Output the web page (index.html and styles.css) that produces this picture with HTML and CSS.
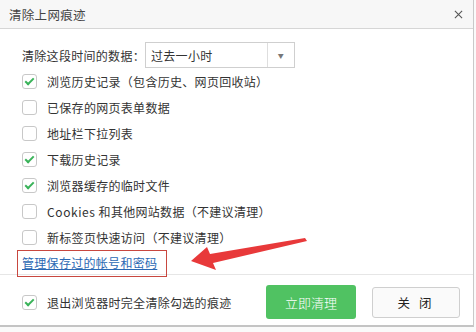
FILE: index.html
```html
<!DOCTYPE html>
<html lang="zh-CN">
<head>
    <meta charset="UTF-8">
    <title>清除上网痕迹</title>
    <link rel="stylesheet" href="styles.css">
</head>
<body>
    <div class="dialog">
        <div class="title">
            <span>清除上网痕迹</span>
            <svg class="close" viewBox="0 0 10 10"><path d="M1 1 9 9M9 1 1 9" stroke="#555" stroke-width="1.2"/></svg>
        </div>

        <div class="body">
            <div class="range">
                <span>清除这段时间的数据：</span>
                <div class="select">
                    <span class="value">过去一小时</span>
                    <span class="caret">▼</span>
                </div>
            </div>

            <label class="row"><span class="box on"></span>浏览历史记录（包含历史、网页回收站）</label>
            <label class="row"><span class="box"></span>已保存的网页表单数据</label>
            <label class="row"><span class="box"></span>地址栏下拉列表</label>
            <label class="row"><span class="box on"></span>下载历史记录</label>
            <label class="row"><span class="box on"></span>浏览器缓存的临时文件</label>
            <label class="row"><span class="box"></span><span class="latin">Cookies</span>&nbsp;和其他网站数据（不建议清理）</label>
            <label class="row"><span class="box"></span>新标签页快速访问（不建议清理）</label>

            <div class="links">
                <a href="#">管理保存过的帐号和密码</a>
            </div>
        </div>

        <div class="footer">
            <label class="row"><span class="box on"></span>退出浏览器时完全清除勾选的痕迹</label>
            <div class="buttons">
                <button class="btn primary">立即清理</button>
                <button class="btn close-btn">关 闭</button>
            </div>
        </div>

        <!-- annotation drawn over the screenshot -->
        <div class="mark"></div>
        <svg class="arrow" viewBox="0 0 476 332">
            <polygon points="191,261 207,247 210,254 305,238 307,241 213,263 216,270" fill="#e8393a"/>
        </svg>
    </div>
</body>
</html>
```

FILE: styles.css
```css
body{
    margin: 0;
    background: #fafafa;
    font-family: "Noto Sans CJK SC", "Noto Sans", sans-serif;
    font-size: 12px;
    letter-spacing: 0.3px;
    color: #333;
}
.dialog{
    position: relative;
    width: 473px;
    height: 325px;
    background: #fff;
    border-right: 1px solid #c9c9c9;
    border-bottom: 2px solid #c4c4c4;
    box-shadow: 0 4px 0 #e6e6e6;
}
.title{
    height: 28px;
    background: #f7f7f7;
    border-bottom: 1px solid #d6d6d6;
    padding: 0 10px 0 9px;
    display: flex;
    justify-content: space-between;
    align-items: center;
    color: #444;
    font-size: 12.5px;
}
.title .close{
    width: 9px;
    height: 9px;
}
.body{
    padding: 13px 22px 0;
}
.range{
    display: flex;
    align-items: center;
    height: 26px;
}
.select{
    margin-left: 0;
    width: 148px;
    height: 24px;
    border: 1px solid #cfcfcf;
    display: flex;
    align-items: center;
}
.select .value{
    flex: 1;
    padding-left: 5px;
}
.select .caret{
    width: 26px;
    height: 24px;
    border-left: 1px solid #dedede;
    font-size: 6px;
    color: #777;
    display: flex;
    align-items: center;
    justify-content: center;
}
.row{
    display: flex;
    align-items: center;
    height: 26px;
}
.latin{
    letter-spacing: 0.6px;
}
.box{
    width: 13px;
    height: 13px;
    border: 1px solid #c8c8c8;
    border-radius: 3px;
    margin-right: 10px;
    position: relative;
}
.box.on::after{
    content: "";
    position: absolute;
    left: 4px;
    top: 1px;
    width: 3px;
    height: 7px;
    border-right: 2px solid #3ab35a;
    border-bottom: 2px solid #3ab35a;
    transform: rotate(45deg);
}
.links{
    height: 24px;
    display: flex;
    align-items: center;
}
.links a{
    color: #2b68b3;
}
.footer{
    border-top: 1px solid #e6e6e6;
    height: 50px;
    padding: 2px 13px 0 22px;
    display: flex;
    justify-content: space-between;
    align-items: center;
}
.buttons{
    display: flex;
    align-items: center;
    gap: 16px;
}
.btn{
    width: 88px;
    height: 31px;
    border: 1px solid #cfcfcf;
    border-radius: 3px;
    background: #fafafa;
    font-family: inherit;
    font-size: 12.5px;
    color: #222;
}
.btn.close-btn{
    letter-spacing: 3px;
}
.btn.primary{
    width: 90px;
    height: 34px;
    border: none;
    background: #50c262;
    color: #fff;
    font-size: 13px;
    font-weight: 300;
}
.mark{
    position: absolute;
    left: 17px;
    top: 250px;
    width: 148px;
    height: 25px;
    border: 1px solid #c8473f;
}
.arrow{
    position: absolute;
    left: 0;
    top: 0;
    width: 476px;
    height: 332px;
}
```
